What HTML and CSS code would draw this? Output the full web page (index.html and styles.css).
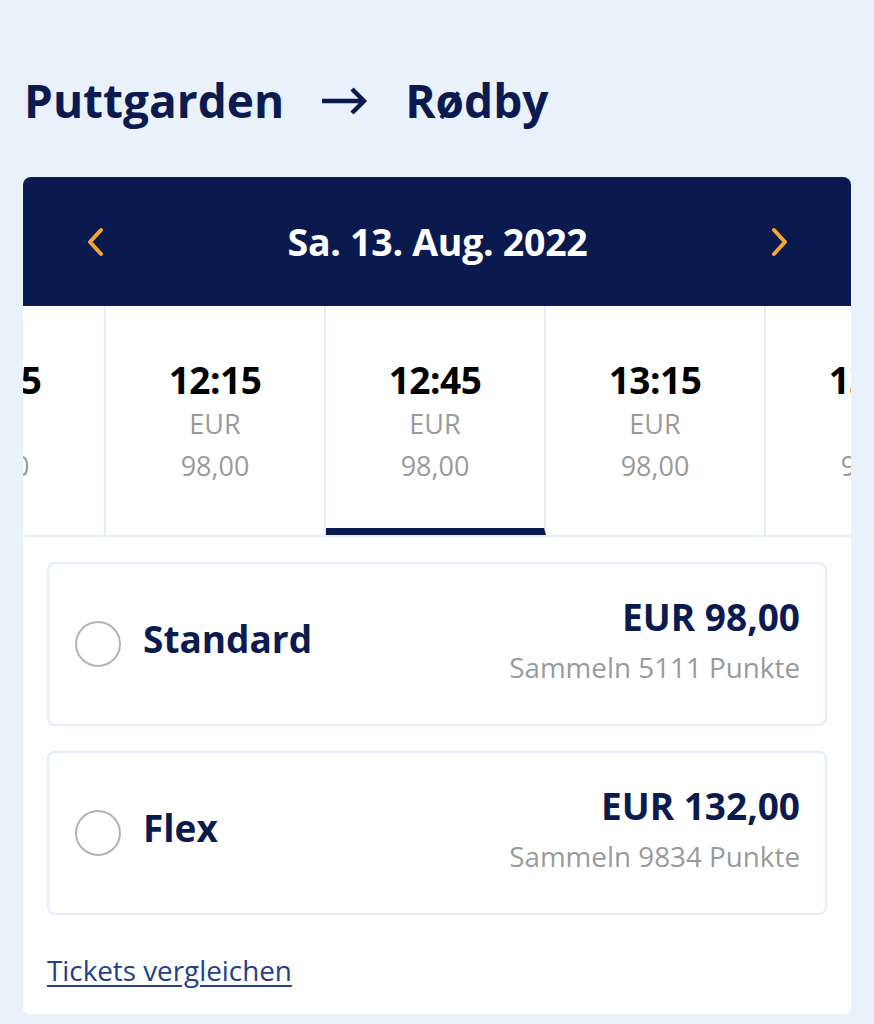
FILE: index.html
```html
<!DOCTYPE html>
<html lang="de">
<head>
  <meta charset="UTF-8">
  <title>Puttgarden – Rødby</title>
  <link rel="stylesheet" href="styles.css">
</head>
<body>

<h1 class="route">
  <span>Puttgarden</span>
  <svg class="route-arrow" width="48" height="30" viewBox="0 0 48 30"><path d="M2 15 H44 M32 3 L44 15 L32 27" fill="none" stroke="#0b1b50" stroke-width="4.5" stroke-linejoin="miter"/></svg>
  <span>Rødby</span>
</h1>

<div class="card">
  <div class="date-bar">
    <button class="nav-btn" aria-label="Vorheriger Tag">
      <svg width="18" height="30" viewBox="0 0 18 30"><path d="M15 3 L4 15 L15 27" fill="none" stroke="#f2a636" stroke-width="4" stroke-linecap="round" stroke-linejoin="round"/></svg>
    </button>
    <div class="date-text">Sa. 13. Aug. 2022</div>
    <button class="nav-btn" aria-label="Nächster Tag">
      <svg width="18" height="30" viewBox="0 0 18 30"><path d="M3 3 L14 15 L3 27" fill="none" stroke="#f2a636" stroke-width="4" stroke-linecap="round" stroke-linejoin="round"/></svg>
    </button>
  </div>

  <div class="departures">
    <div class="departure-track">
      <div class="departure"><div class="dep-time">11:45</div><div class="dep-cur">EUR</div><div class="dep-price">98,00</div></div>
      <div class="departure"><div class="dep-time">12:15</div><div class="dep-cur">EUR</div><div class="dep-price">98,00</div></div>
      <div class="departure selected"><div class="dep-time">12:45</div><div class="dep-cur">EUR</div><div class="dep-price">98,00</div></div>
      <div class="departure"><div class="dep-time">13:15</div><div class="dep-cur">EUR</div><div class="dep-price">98,00</div></div>
      <div class="departure"><div class="dep-time">13:45</div><div class="dep-cur">EUR</div><div class="dep-price">98,00</div></div>
    </div>
  </div>

  <div class="fares">
    <label class="fare">
      <span class="radio"></span>
      <span class="fare-name">Standard</span>
      <span class="fare-info">
        <span class="fare-price">EUR 98,00</span>
        <span class="fare-points">Sammeln 5111 Punkte</span>
      </span>
    </label>

    <label class="fare">
      <span class="radio"></span>
      <span class="fare-name">Flex</span>
      <span class="fare-info">
        <span class="fare-price">EUR 132,00</span>
        <span class="fare-points">Sammeln 9834 Punkte</span>
      </span>
    </label>

    <a class="compare-link" href="#">Tickets vergleichen</a>
  </div>
</div>

</body>
</html>
```

FILE: styles.css
```css
body {
  margin: 0;
  padding: 0 23px;
  background: #e9f1fb;
  font-family: 'Open Sans', 'Noto Sans', sans-serif;
  color: #0b1b50;
}

.route {
  display: flex;
  align-items: center;
  margin: 69px 0 46px 1px;
  height: 62px;
  font-size: 46px;
  font-weight: 700;
  color: #0b1b50;
  white-space: nowrap;
}

.route-arrow {
  margin: 2px 37px 0 36px;
}

.card {
  background: #fff;
  border-radius: 8px 8px 6px 6px;
  overflow: hidden;
}

/* Date header */
.date-bar {
  height: 129px;
  background: #0a1a4e;
  display: flex;
  align-items: center;
  justify-content: space-between;
  padding: 0 62px 0 63px;
}

.nav-btn {
  background: none;
  border: none;
  padding: 0;
  width: 18px;
  height: 30px;
  cursor: pointer;
}

.date-text {
  color: #fff;
  font-size: 37.5px;
  font-weight: 700;
  letter-spacing: -0.3px;
}

/* Departure strip */
.departures {
  overflow: hidden;
  border-bottom: 2px solid #e6eef9;
}

.departure-track {
  display: flex;
  margin-left: -137px;
}

.departure {
  flex: 0 0 220px;
  box-sizing: border-box;
  height: 229px;
  padding-top: 51px;
  text-align: center;
  border-right: 2px solid #e6eef9;
}

.departure.selected {
  border-bottom: 7px solid #0a1a4e;
}

.dep-time {
  font-size: 37px;
  line-height: 46px;
  font-weight: 700;
  color: #000;
  letter-spacing: -0.5px;
}

.dep-cur,
.dep-price {
  font-size: 27px;
  line-height: 42px;
  color: #9a9a9a;
}

/* Fare options */
.fares {
  padding: 25px 24px 25px;
  display: flex;
  flex-direction: column;
}

.fare {
  flex: 0 0 auto;
  display: flex;
  align-items: center;
  height: 164px;
  box-sizing: border-box;
  border: 2px solid #e3ecf8;
  border-radius: 8px;
  padding: 0 25px 0 26px;
  margin-bottom: 25px;
  cursor: pointer;
}

.radio {
  flex: 0 0 auto;
  width: 46px;
  height: 46px;
  box-sizing: border-box;
  border: 2px solid #b3b3b3;
  border-radius: 50%;
  margin-right: 22px;
}

.fare-name {
  flex: 1;
  font-size: 37px;
  line-height: 50px;
  margin-bottom: 10px;
  font-weight: 700;
  color: #0b1b50;
}

.fare-info {
  display: flex;
  flex-direction: column;
  align-items: flex-end;
  margin-top: -4px;
}

.fare-price {
  font-size: 37px;
  line-height: 46px;
  font-weight: 700;
  color: #0b1b50;
}

.fare-points {
  margin-top: 4px;
  font-size: 27.8px;
  line-height: 46px;
  color: #9a9a9a;
}

.compare-link {
  margin-top: 11px;
  align-self: flex-start;
  font-size: 27.8px;
  line-height: 38px;
  color: #24408a;
  text-decoration: underline;
  text-underline-offset: 4px;
}
```
